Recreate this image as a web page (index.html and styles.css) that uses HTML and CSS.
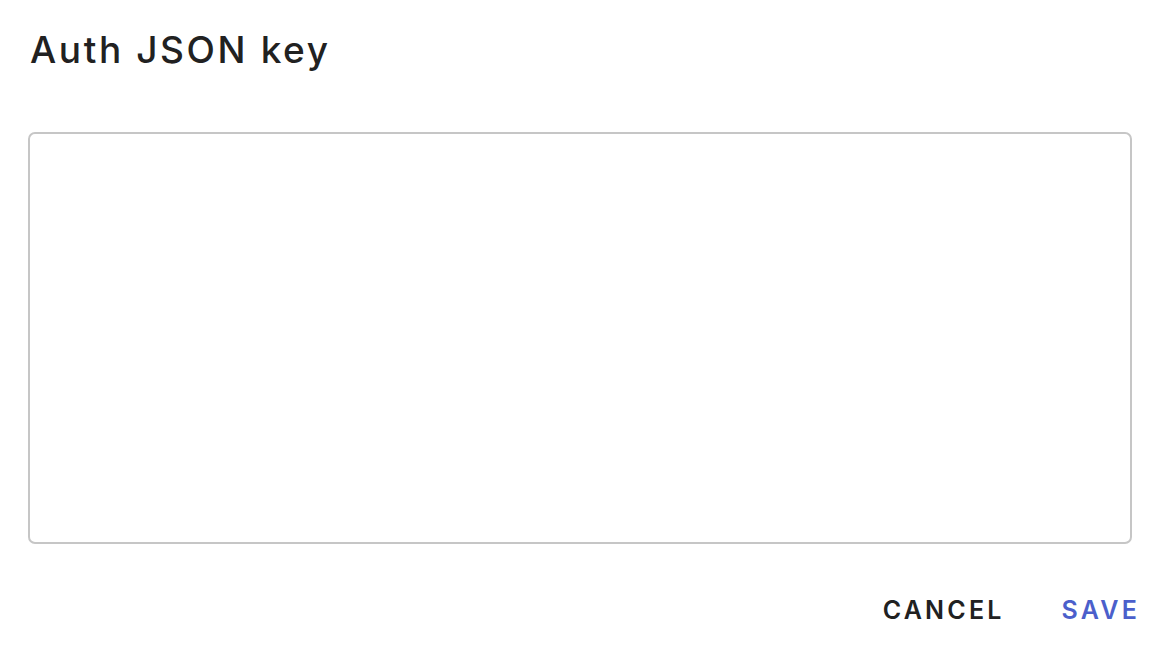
FILE: index.html
```html
<!DOCTYPE html>
<html>
<head>
<meta charset="utf-8">
<link rel="stylesheet" href="styles.css">
</head>
<body>
<div class="dialog">
  <h1 class="title">Auth JSON key</h1>
  <textarea class="key-input"></textarea>
  <div class="actions">
    <button class="btn btn-cancel">CANCEL</button>
    <button class="btn btn-save">SAVE</button>
  </div>
</div>
</body>
</html>
```
FILE: styles.css
```css
html, body {
  margin: 0;
  padding: 0;
  background: #ffffff;
}
.dialog {
  width: 1168px;
  height: 652px;
  box-sizing: border-box;
  padding: 26px 0 0 28px;
  display: flex;
  flex-direction: column;
  font-family: Inter, "Liberation Sans", sans-serif;
}
.title {
  margin: 0 0 0 2px;
  font-size: 37px;
  font-weight: 500;
  color: #212121;
  line-height: 48px;
  letter-spacing: 2.6px;
}
.key-input {
  margin-top: 58px;
  width: 1104px;
  height: 412px;
  box-sizing: border-box;
  border: 2px solid #c6c6c6;
  border-radius: 7px;
  resize: none;
  outline: none;
  padding: 10px;
  font-family: inherit;
}
.actions {
  display: flex;
  justify-content: flex-end;
  gap: 57px;
  margin-top: 50px;
  width: 1112px;
}
.btn {
  border: none;
  background: none;
  padding: 0;
  font-family: Inter, "Liberation Sans", sans-serif;
  font-size: 25px;
  font-weight: 600;
  letter-spacing: 3.2px;
  line-height: 32px;
  cursor: pointer;
}
.btn-cancel { color: #212121; }
.btn-save { color: #4b5fcb; }
```
